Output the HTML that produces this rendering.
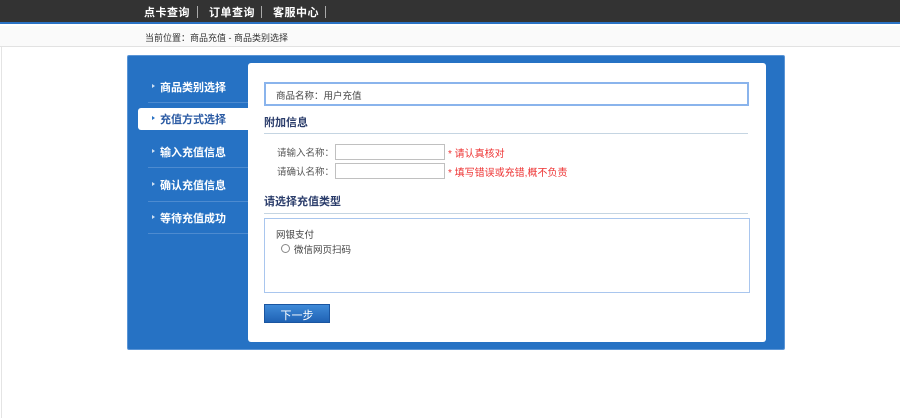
<!DOCTYPE html>
<html><head><meta charset="utf-8"><style>
*{margin:0;padding:0;box-sizing:border-box}
body{width:900px;height:418px;background:#fff;font-family:"Liberation Sans","Noto Sans CJK SC",sans-serif;font-size:12px;position:relative;overflow:hidden}
.lb{position:absolute;left:1px;top:26px;width:1px;height:392px;background:#e4e4e4}
.top{position:absolute;left:0;top:0;width:900px;height:24px;background:#333;border-bottom:2px solid #2a72c4}
.top span{position:absolute;top:4px;color:#fff;font-size:11px;font-weight:bold;letter-spacing:0.5px}
.top i{position:absolute;top:6px;width:1px;height:12px;background:#aaa}
.crumb{position:absolute;left:0;top:26px;width:900px;height:21px;background:#fafafa;border-bottom:1px solid #e2e2e2;font-size:9px;color:#333;padding:5px 0 0 145px}
.panel{position:absolute;left:127px;top:55px;width:658px;height:295px;background:#2672c4;border:1px solid #5b95d6;border-radius:2px}
.inner{position:absolute;left:120px;top:7px;width:518px;height:279px;background:#fff;border-radius:3px}
.nav{position:absolute;left:10px;width:110px;height:22px;color:#fff;font-size:11px;font-weight:bold;padding:3px 0 0 22px}
.nav:before{content:"";position:absolute;left:14px;top:8px;border-left:3px solid #cfe0f3;border-top:2.5px solid transparent;border-bottom:2.5px solid transparent}
.nav.act{background:#fff;color:#2a5aa3;border-radius:3px 0 0 3px}
.nav.act:before{border-left-color:#2a72c4}
.sep{position:absolute;left:20px;width:100px;height:1px;background:#4d8bd0}
.abs{position:absolute}
.h{font-size:11px;font-weight:bold;color:#2b3d6b}
.line{position:absolute;left:16px;width:484px;height:1px;background:#c5d5e2}
.inp{position:absolute;width:110px;height:16px;border:1px solid #c0c0c0}
.lbl{position:absolute;font-size:9.5px;color:#555}
.red{position:absolute;font-size:10px;color:#e33}
</style></head><body>
<div class="lb"></div>
<div class="top">
<span style="left:144px">点卡查询</span><i style="left:197px"></i>
<span style="left:209px">订单查询</span><i style="left:261px"></i>
<span style="left:273px">客服中心</span><i style="left:325px"></i>
</div>
<div class="crumb">当前位置：商品充值 - 商品类别选择</div>
<div class="panel">
<div class="nav" style="top:20px">商品类别选择</div>
<div class="sep" style="top:46px"></div>
<div class="nav act" style="top:52px">充值方式选择</div>
<div class="nav" style="top:85px">输入充值信息</div>
<div class="sep" style="top:111px"></div>
<div class="nav" style="top:118px">确认充值信息</div>
<div class="sep" style="top:145px"></div>
<div class="nav" style="top:151px">等待充值成功</div>
<div class="sep" style="top:177px"></div>
<div class="inner">
<div class="abs" style="left:16px;top:19px;width:485px;height:24px;border:2px solid #8ab4ec;font-size:9.5px;color:#444;padding:4px 0 0 10px">商品名称：用户充值</div>
<div class="abs h" style="left:16px;top:51px">附加信息</div>
<div class="line" style="top:70px"></div>
<div class="lbl" style="left:29px;top:82px">请输入名称：</div>
<div class="inp" style="left:87px;top:81px"></div>
<div class="red" style="left:200px;top:82px">* 请认真核对</div>
<div class="lbl" style="left:29px;top:101px">请确认名称：</div>
<div class="inp" style="left:87px;top:100px"></div>
<div class="red" style="left:200px;top:101px">* 填写错误或充错,概不负责</div>
<div class="abs h" style="left:16px;top:130px">请选择充值类型</div>
<div class="line" style="top:150px"></div>
<div class="abs" style="left:16px;top:155px;width:486px;height:75px;border:1px solid #a9c6ee">
<div class="lbl" style="left:11px;top:8px;color:#444">网银支付</div>
<div class="abs" style="left:16px;top:25px;width:9px;height:9px;border:1px solid #888;border-radius:50%"></div>
<div class="lbl" style="left:29px;top:23px;color:#444">微信网页扫码</div>
</div>
<div class="abs" style="left:16px;top:241px;width:66px;height:19px;background:linear-gradient(#3f8ad8,#1f62b4);border:1px solid #1a55a0;color:#fff;font-size:11px;text-align:center;padding-top:2px">下一步</div>
</div>
</div>
</body></html>
